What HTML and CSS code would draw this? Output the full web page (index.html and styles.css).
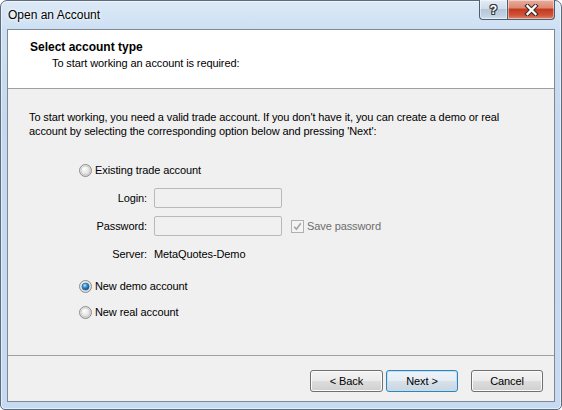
FILE: index.html
```html
<!DOCTYPE html>
<html>
<head>
<meta charset="utf-8">
<title>Open an Account</title>
<link rel="stylesheet" href="styles.css">
</head>
<body>
<div class="window">
  <div class="titlebar">
    <span class="title">Open an Account</span>
    <div class="caption">
      <div class="cbtn help"><span class="qmark">?</span></div>
      <div class="cbtn close">
        <svg width="15" height="12" viewBox="0 0 15 12">
          <path d="M3.5 2 L11.5 10 M11.5 2 L3.5 10" stroke="#3a2a28" stroke-width="4.4" stroke-linecap="square" fill="none"/>
          <path d="M3.5 2 L11.5 10 M11.5 2 L3.5 10" stroke="#ffffff" stroke-width="2.3" stroke-linecap="square" fill="none"/>
        </svg>
      </div>
    </div>
  </div>
  <div class="client">
    <div class="header">
      <div class="h-title">Select account type</div>
      <div class="h-sub">To start working an account is required:</div>
    </div>
    <div class="body">
      <p class="intro">To start working, you need a valid trade account. If you don't have it, you can create a demo or real<br>account by selecting the corresponding option below and pressing 'Next':</p>
      <div class="options">
        <div class="radio-row">
          <svg class="radio" width="13" height="13" viewBox="0 0 13 13">
            <defs><radialGradient id="rg1" cx="40%" cy="35%" r="70%"><stop offset="0" stop-color="#ffffff"/><stop offset="1" stop-color="#d2d2d2"/></radialGradient></defs>
            <circle cx="6.5" cy="6.5" r="6" fill="url(#rg1)" stroke="#8d8d8d"/>
            <circle cx="6.5" cy="6.5" r="4.5" fill="none" stroke="#bdbdbd" stroke-width="1" opacity="0.7"/>
          </svg>
          <span>Existing trade account</span>
        </div>
        <div class="form">
          <span class="lbl">Login:</span>
          <div class="field"></div>
          <span></span>
          <span class="lbl">Password:</span>
          <div class="field"></div>
          <div class="check-row">
            <svg class="check" width="13" height="13" viewBox="0 0 13 13">
              <rect x="0.5" y="0.5" width="12" height="12" fill="#f4f4f4" stroke="#b1b1b1"/>
              <path d="M3.2 6.8 L5.4 9.2 L9.8 3.2" stroke="#a3a3a3" stroke-width="1.6" fill="none"/>
            </svg>
            <span class="disabled">Save password</span>
          </div>
          <span class="lbl">Server:</span>
          <span class="val">MetaQuotes-Demo</span>
          <span></span>
        </div>
        <div class="radio-row demo">
          <svg class="radio" width="13" height="13" viewBox="0 0 13 13">
            <defs>
              <radialGradient id="rg2" cx="40%" cy="35%" r="70%"><stop offset="0" stop-color="#ffffff"/><stop offset="1" stop-color="#d2d2d2"/></radialGradient>
              <radialGradient id="dot" cx="40%" cy="35%" r="65%"><stop offset="0" stop-color="#b7e6ff"/><stop offset="0.45" stop-color="#3b94d3"/><stop offset="1" stop-color="#0d4a86"/></radialGradient>
            </defs>
            <circle cx="6.5" cy="6.5" r="6" fill="url(#rg2)" stroke="#8d8d8d"/>
            <circle cx="6.5" cy="6.5" r="3.6" fill="url(#dot)" stroke="#1f5f96" stroke-width="0.6"/>
          </svg>
          <span>New demo account</span>
        </div>
        <div class="radio-row real">
          <svg class="radio" width="13" height="13" viewBox="0 0 13 13">
            <defs><radialGradient id="rg3" cx="40%" cy="35%" r="70%"><stop offset="0" stop-color="#ffffff"/><stop offset="1" stop-color="#d2d2d2"/></radialGradient></defs>
            <circle cx="6.5" cy="6.5" r="6" fill="url(#rg3)" stroke="#8d8d8d"/>
            <circle cx="6.5" cy="6.5" r="4.5" fill="none" stroke="#bdbdbd" stroke-width="1" opacity="0.7"/>
          </svg>
          <span>New real account</span>
        </div>
      </div>
    </div>
    <div class="footer">
      <button class="btn back">&lt; Back</button>
      <button class="btn next">Next &gt;</button>
      <button class="btn cancel">Cancel</button>
    </div>
  </div>
</div>
</body>
</html>
```

FILE: styles.css
```css
* { box-sizing: border-box; }
html, body { margin: 0; padding: 0; }
body {
  width: 562px;
  height: 410px;
  overflow: hidden;
  background: #ffffff;
  font-family: "Liberation Sans", Arial, sans-serif;
  font-size: 11px;
  letter-spacing: -0.1px;
  color: #000000;
}
.window {
  width: 562px;
  height: 410px;
  border: 1px solid #5c6b7d;
  border-radius: 7px 7px 5px 5px;
  background: linear-gradient(180deg, #dce9f6 0px, #cde0f3 28px, #c4d9ef 120px, #c6dbf1 100%);
  box-shadow: inset 0 0 0 1px rgba(255, 255, 255, 0.55);
  display: flex;
  flex-direction: column;
}
.titlebar {
  height: 28px;
  display: flex;
  align-items: flex-start;
  padding-left: 7px;
  flex: none;
}
.title {
  font-size: 12px;
  line-height: 14px;
  letter-spacing: 0;
  margin-top: 7px;
  color: #000000;
  text-shadow: 0 0 5px #ffffff, 0 0 3px #ffffff;
}
.caption {
  margin-left: auto;
  margin-right: 6px;
  margin-top: -1px;
  display: flex;
}
.cbtn {
  height: 20px;
  border: 1px solid #4f5d70;
  border-top: none;
  display: flex;
  align-items: center;
  justify-content: center;
  box-shadow: inset 0 0 0 1px rgba(255, 255, 255, 0.45);
}
.help {
  width: 28px;
  border-right: none;
  border-radius: 0 0 0 4px;
  background: linear-gradient(180deg, #e3ecf6 0%, #d0dcea 45%, #b5c6da 50%, #c3d3e5 85%, #d4e1ef 100%);
}
.qmark {
  font-family: "Liberation Sans", Arial, sans-serif;
  font-weight: bold;
  font-size: 12px;
  line-height: 12px;
  letter-spacing: 0;
  color: #ffffff;
  text-shadow: 1px 0 0 #3b3b3b, -1px 0 0 #3b3b3b, 0 1px 0 #3b3b3b, 0 -1px 0 #3b3b3b, 1px 1px 0 #3b3b3b, -1px -1px 0 #3b3b3b, 1px -1px 0 #3b3b3b, -1px 1px 0 #3b3b3b;
}
.close {
  width: 48px;
  border-radius: 0 0 4px 0;
  background: linear-gradient(180deg, #e9ad9e 0%, #dc8a74 40%, #c43a1e 50%, #cf5239 80%, #e08a6d 100%);
}
.client {
  flex: 1;
  margin: 0 6px 7px 6px;
  border: 1px solid #7f8893;
  background: #f0f0f0;
  display: flex;
  flex-direction: column;
}
.header {
  height: 59px;
  flex: none;
  background: #ffffff;
  border-bottom: 1px solid #a0a0a0;
  padding: 10px 0 0 22px;
}
.h-title {
  font-weight: bold;
  font-size: 12px;
  line-height: 14px;
  letter-spacing: 0;
}
.h-sub {
  margin: 2px 0 0 22px;
  line-height: 14px;
}
.body {
  flex: 1;
  padding: 21px 0 0 21px;
}
.intro {
  margin: 0;
  line-height: 14px;
  white-space: nowrap;
}
.options {
  margin: 24px 0 0 50px;
}
.radio-row {
  display: flex;
  align-items: center;
  gap: 3px;
  height: 16px;
}
.radio { display: block; flex: none; }
.radio-row.demo { margin-top: 14px; }
.radio-row.real { margin-top: 10px; }
.form {
  display: grid;
  grid-template-columns: 52px 128px auto;
  grid-template-rows: 20px 20px 20px;
  column-gap: 7px;
  row-gap: 8px;
  margin: 10px 0 0 16px;
  align-items: center;
}
.lbl { text-align: right; }
.field {
  height: 20px;
  border: 1px solid #b9b9b9;
  border-radius: 2px;
  background: #f0f0f0;
}
.check-row {
  display: flex;
  align-items: center;
  gap: 3px;
  margin-left: 2px;
}
.check { display: block; flex: none; }
.disabled { color: #6d6d6d; }
.footer {
  height: 46px;
  flex: none;
  border-top: 1px solid #a0a0a0;
  padding: 14px 11px 9px 0;
  display: flex;
  justify-content: flex-end;
}
.btn {
  height: 22px;
  width: 72px;
  padding: 0;
  border: 1px solid #707070;
  border-radius: 3px;
  background: linear-gradient(180deg, #f2f2f2 0%, #ebebeb 50%, #dddddd 51%, #cfcfcf 100%);
  box-shadow: inset 0 0 0 1px #fbfbfb;
  font-family: "Liberation Sans", Arial, sans-serif;
  font-size: 11px;
  letter-spacing: -0.1px;
  color: #000000;
}
.back { width: 73px; margin-right: 3px; }
.next {
  border-color: #3c7fb1;
  box-shadow: inset 0 0 0 1px #b7e3f9;
  background: linear-gradient(180deg, #eef4f8 0%, #e5edf3 50%, #d6e1ea 51%, #c9d6e1 100%);
  margin-right: 13px;
}
```
